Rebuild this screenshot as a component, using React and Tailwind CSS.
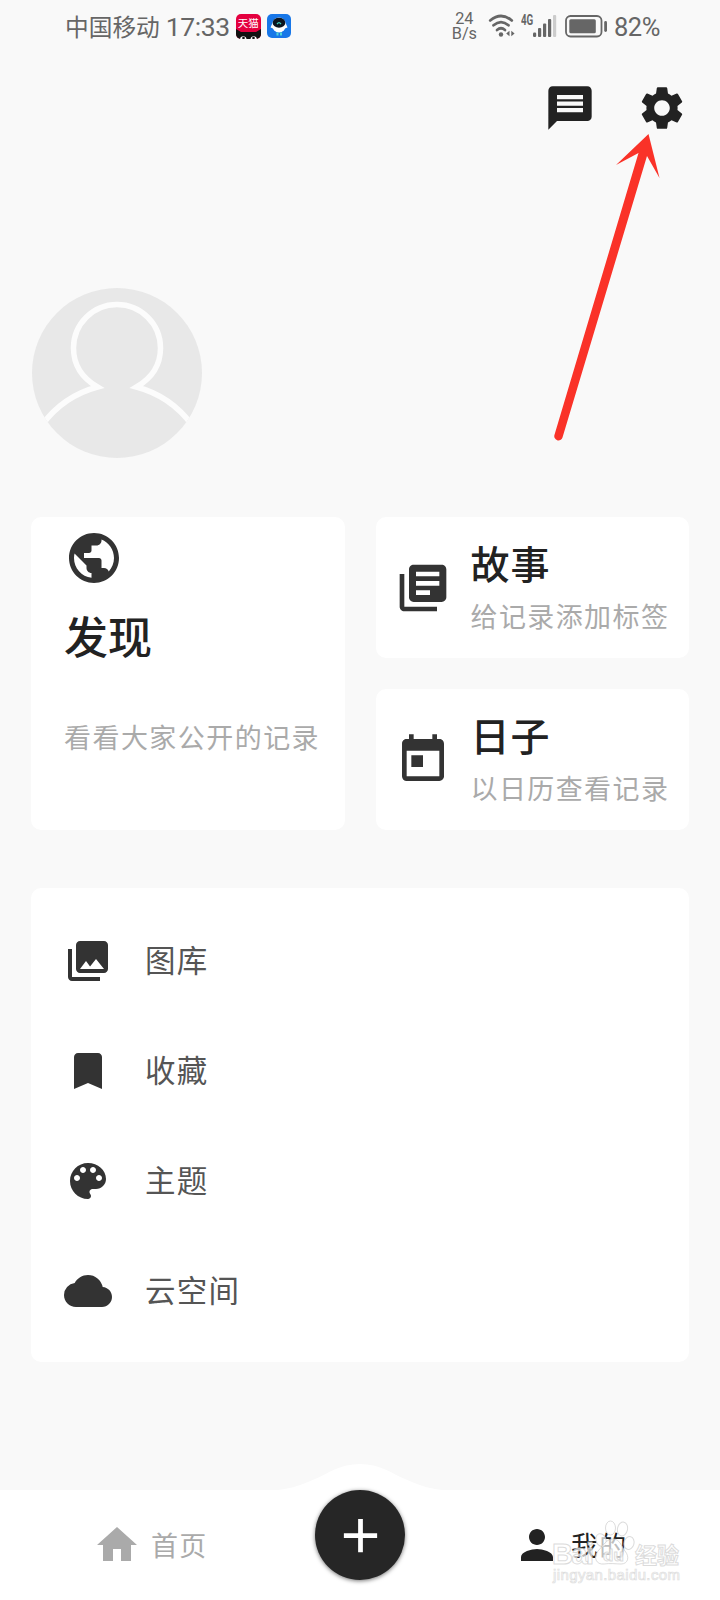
import React from "react";
import {
  MdMessage,
  MdSettings,
  MdPublic,
  MdLibraryBooks,
  MdToday,
  MdBookmark,
  MdCloud,
  MdHome,
  MdPerson,
  MdAdd,
} from "react-icons/md";

const PhotoLibraryIcon = () => (
  <svg viewBox="0 0 24 24" className="w-12 h-12" fill="currentColor">
    <path d="M22 16V4c0-1.1-.9-2-2-2H8c-1.1 0-2 .9-2 2v12c0 1.1.9 2 2 2h12c1.1 0 2-.9 2-2zm-11-4l2.03 2.71L16 11l4 5H8l3-4zM2 6v14c0 1.1.9 2 2 2h14v-2H4V6H2z" />
  </svg>
);

const PaletteIcon = () => (
  <svg viewBox="0 0 24 24" className="w-12 h-12" fill="currentColor">
    <path d="M12 3c-4.97 0-9 4.03-9 9s4.03 9 9 9c.83 0 1.5-.67 1.5-1.5 0-.39-.15-.74-.39-1.01-.23-.26-.38-.61-.38-.99 0-.83.67-1.5 1.5-1.5H16c2.76 0 5-2.24 5-5 0-4.42-4.03-8-9-8zm-5.5 9c-.83 0-1.5-.67-1.5-1.5S5.67 9 6.5 9 8 9.67 8 10.5 7.33 12 6.5 12zm3-4C8.67 8 8 7.33 8 6.5S8.67 5 9.5 5s1.5.67 1.5 1.5S10.33 8 9.5 8zm5 0c-.83 0-1.5-.67-1.5-1.5S13.67 5 14.5 5s1.5.67 1.5 1.5S15.33 8 14.5 8zm3 4c-.83 0-1.5-.67-1.5-1.5S16.67 9 17.5 9s1.5.67 1.5 1.5-.67 1.5-1.5 1.5z" />
  </svg>
);

const menuItems = [
  { label: "图库", icon: <PhotoLibraryIcon /> },
  { label: "收藏", icon: <MdBookmark size={48} /> },
  { label: "主题", icon: <PaletteIcon /> },
  { label: "云空间", icon: <MdCloud size={48} /> },
];

function StatusBar() {
  return (
    <div className="h-[54px] shrink-0 pl-[65px] pr-[59px] flex items-center text-[#666]">
      <span className="mt-[-2px] text-[23.7px] leading-[54px] whitespace-nowrap">中国移动</span>
      <span className="ml-[6px] w-[64px] text-[26.5px] leading-[54px] tracking-[-0.4px] font-[Roboto]">17:33</span>

      {/* Notification app icons */}
      <div className="ml-[6px] mt-[-2px] w-[25px] h-[25px] rounded-[5px] bg-[#e4003f] relative overflow-hidden">
        <span className="block text-center text-white text-[10.5px] leading-[18px] whitespace-nowrap">天猫</span>
        <svg viewBox="0 0 25 10" className="absolute left-0 bottom-0 w-[25px] h-[10px]">
          <path d="M0 0l5 3h15l5-3v10H0z" fill="#111" />
          <path d="M4 10a3.3 3.3 0 0 1 6.5 0zM14.5 10a3.3 3.3 0 0 1 6.5 0z" fill="#fff" />
          <circle cx="7.5" cy="9" r="1.3" fill="#111" />
          <circle cx="17.5" cy="9" r="1.3" fill="#111" />
        </svg>
      </div>
      <svg viewBox="0 0 24 24" className="ml-[6px] mt-[-2px] w-[24px] h-[24px]">
        <rect width="24" height="24" rx="5" fill="#1877e8" />
        <path d="M5 10L3.5 13.500l3 1zM19 10l1.5 3.500-3 1z" fill="#fff" />
        <ellipse cx="12" cy="11" rx="7" ry="7.5" fill="#fff" />
        <ellipse cx="12" cy="8.8" rx="6.3" ry="5" fill="#0c1520" />
        <path d="M10 10.200q2-3 4 0" stroke="#3fd0c0" strokeWidth="1.2" fill="none" />
        <path d="M10.5 18.500v3M14 18.500v3" stroke="#4fd6d8" strokeWidth="2" />
      </svg>

      <div className="ml-auto flex flex-col items-center text-[16.3px] leading-[15px] font-[Roboto] mt-[-2px]">
        <span>24</span>
        <span>B/s</span>
      </div>
      <svg viewBox="0 0 28 24" className="ml-[11px] mt-[-2px] w-[28px] h-[24px]">
        <g fill="none" stroke="#666" strokeWidth="2.7" strokeLinecap="round">
          <path d="M2.2 6.500q10.800-9 21.600 0" />
          <path d="M5.5 11.300q7.500-6.500 15 0" />
          <path d="M9 16q4-3.500 8 0" />
        </g>
        <circle cx="13" cy="20.5" r="2.2" fill="#666" />
        <path d="M21.5 16.800v5.400l-3.300-2.700zM23.300 16.800v5.400l3.300-2.700z" fill="#666" />
      </svg>
      <span className="ml-[5px] mt-[-14px] text-[14px] leading-[12px] font-bold w-[12px] font-[Roboto]">
        <span className="inline-block origin-left scale-x-[0.7]">4G</span>
      </span>
      <svg viewBox="0 0 24 24" className="mt-[-2px] w-[24px] h-[24px]">
        <g fill="#666">
          <rect x="0" y="18.5" width="3.2" height="4.5" rx="1.2" />
          <rect x="5" y="14" width="3.2" height="9" rx="1" />
          <rect x="10" y="9.5" width="3.2" height="13.5" rx="1" />
          <rect x="15" y="5" width="3.2" height="18" rx="1" />
        </g>
        <rect x="20" y="1" width="3.2" height="22" rx="1" fill="#ccc" />
      </svg>
      <svg viewBox="0 0 43 24" className="ml-[8px] mt-[-2px] w-[43px] h-[24px]">
        <rect x="1" y="2" width="35.5" height="20.5" rx="4.5" fill="none" stroke="#666" strokeWidth="1.8" />
        <rect x="4.3" y="5.3" width="26.5" height="14" rx="1.5" fill="#666" />
        <rect x="39.2" y="7" width="2.8" height="11" rx="1.4" fill="#666" />
      </svg>
      <span className="ml-[6px] w-[47px] text-[25.5px] leading-[54px] tracking-[-0.5px] font-[Roboto]">82%</span>
    </div>
  );
}

function SmallCard({ icon, title, desc }) {
  return (
    <div className="bg-white rounded-[10px] pl-[19px] flex items-center">
      {icon}
      <div className="ml-[20px] flex flex-col">
        <span className="text-[39px] leading-[48px] tracking-[1px] font-medium text-[#222]">{title}</span>
        <span className="mt-[10px] mb-[2px] text-[27px] leading-[40px] tracking-[1.4px] text-[#aaa] whitespace-nowrap">
          {desc}
        </span>
      </div>
    </div>
  );
}

// Watermark over the right end of the tab bar
function Watermark() {
  return (
    <svg viewBox="0 0 150 72" className="absolute left-[546px] bottom-[13px] w-[150px] h-[72px]">
      <g fill="#fff" fillOpacity="0.7" stroke="#ccc" strokeOpacity="0.7" strokeWidth="1">
        <ellipse cx="64.5" cy="13" rx="5" ry="7" />
        <ellipse cx="76.5" cy="14" rx="5" ry="7" transform="rotate(12 76.5 14)" />
        <ellipse cx="55" cy="25" rx="5" ry="6.5" transform="rotate(-20 55 25)" />
        <ellipse cx="83" cy="28" rx="5" ry="6.5" transform="rotate(15 83 28)" />
        <path d="M67 24c7 0 8 7 12 12 5 6 3 13-4 13-5 0-11-1-17 0-8 1-11-7-6-13 5-5 8-12 15-12z" />
        <text x="6" y="49" fontFamily="Liberation Sans" fontWeight="bold" fontSize="29" textLength="42">Bai</text>
        <text x="57" y="46" fontFamily="Liberation Sans" fontWeight="bold" fontSize="17">du</text>
        <text x="89" y="47.5" fontFamily="Noto Sans CJK SC" fontWeight="bold" fontSize="22">经验</text>
      </g>
      <text x="7" y="65" fontFamily="Liberation Sans" fontSize="15" textLength="127" fill="#fff" stroke="#ddd" strokeWidth="0.7">
        jingyan.baidu.com
      </text>
    </svg>
  );
}

export default function App() {
  return (
    <div className="relative w-[720px] h-[1600px] bg-[#f9f9f9] flex flex-col overflow-hidden font-['Noto_Sans_CJK_SC',sans-serif]">
      <StatusBar />

      {/* Top actions */}
      <div className="h-[52px] mt-[28px] pr-8 flex justify-end gap-[40px] text-[#222]">
        <MdMessage size={52} />
        <MdSettings size={52} />
      </div>

      {/* Avatar */}
      <svg viewBox="0 0 170 170" className="mt-[154px] ml-8 w-[170px] h-[170px] shrink-0">
        <defs>
          <clipPath id="avatar">
            <circle cx="85" cy="85" r="85" />
          </clipPath>
        </defs>
        <g clipPath="url(#avatar)">
          <rect width="170" height="170" fill="#e8e8e8" />
          <path
            d="M10 137C24 118 43 105 65.5 99C50 90 41.5 77 41.5 60a43.5 43.5 0 0 1 87 0C128.5 77 120 90 104.5 99C127 105 146 118 160 137"
            fill="none"
            stroke="#fcfcfc"
            strokeWidth="5.5"
            strokeMiterlimit="10"
          />
        </g>
      </svg>

      {/* Feature cards */}
      <div className="mt-[59px] mx-[31px] h-[313px] shrink-0 grid grid-cols-2 gap-[31px]">
        <div className="bg-white rounded-[10px] pl-[33px] pt-[11px] flex flex-col items-start">
          <MdPublic size={60} className="text-[#333]" />
          <span className="mt-[17px] text-[44px] leading-[60px] font-medium text-[#222]">发现</span>
          <span className="mt-[52px] text-[27px] leading-[40px] tracking-[1.45px] text-[#aaa] whitespace-nowrap">
            看看大家公开的记录
          </span>
        </div>
        <div className="grid grid-rows-2 gap-[31px]">
          <SmallCard icon={<MdLibraryBooks size={56} className="shrink-0 text-[#333]" />} title="故事" desc="给记录添加标签" />
          <SmallCard icon={<MdToday size={56} className="shrink-0 text-[#333]" />} title="日子" desc="以日历查看记录" />
        </div>
      </div>

      {/* Menu list */}
      <div className="mt-[58px] mx-[31px] h-[474px] shrink-0 bg-white rounded-[10px] pl-[33px] pt-[18px] flex flex-col">
        {menuItems.map((item) => (
          <div key={item.label} className="h-[110px] flex items-center gap-[33px] text-[#333]">
            {item.icon}
            <span className="mb-[4px] text-[30.5px] leading-[40px] tracking-[1.2px] text-[#555]">{item.label}</span>
          </div>
        ))}
      </div>

      {/* Tab bar */}
      <div className="relative mt-auto h-[110px] shrink-0 bg-white flex">
        <svg viewBox="0 0 190 27" className="absolute left-[265px] top-[-26px] w-[190px] h-[27px]">
          <path d="M0 27C25 26 36 21 50 15S75 0 95 0S126 9 140 15S165 26 190 27z" fill="#fff" />
        </svg>
        <div className="pl-[93px] pt-[31px] w-[315px] flex items-start gap-[10px] text-[#aaa]">
          <MdHome size={48} />
          <span className="text-[27px] leading-[48px] tracking-[1.35px]">首页</span>
        </div>
        <div className="relative w-[90px] h-[90px] rounded-full bg-[#262626] text-white flex items-center justify-center shadow-[0_1px_4px_rgba(0,0,0,0.55)]">
          <MdAdd size={57} />
        </div>
        <div className="pl-[108px] pt-[31px] w-[315px] flex items-start gap-[10px] text-[#222]">
          <MdPerson size={48} />
          <span className="text-[27px] leading-[48px] tracking-[1.35px]">我的</span>
        </div>
        <Watermark />
      </div>

      {/* Pointer arrow to the settings button */}
      <svg viewBox="0 0 60 310" className="absolute left-[610px] top-[130px] w-[60px] h-[310px] overflow-visible">
        <path d="M38.5 4L49.5 48L37 26L-47.5 307.5A4.200 4.200 0 0 1 -55.5 304.800L28.5 23L6 35z" fill="#fa3228" />
      </svg>
    </div>
  );
}
